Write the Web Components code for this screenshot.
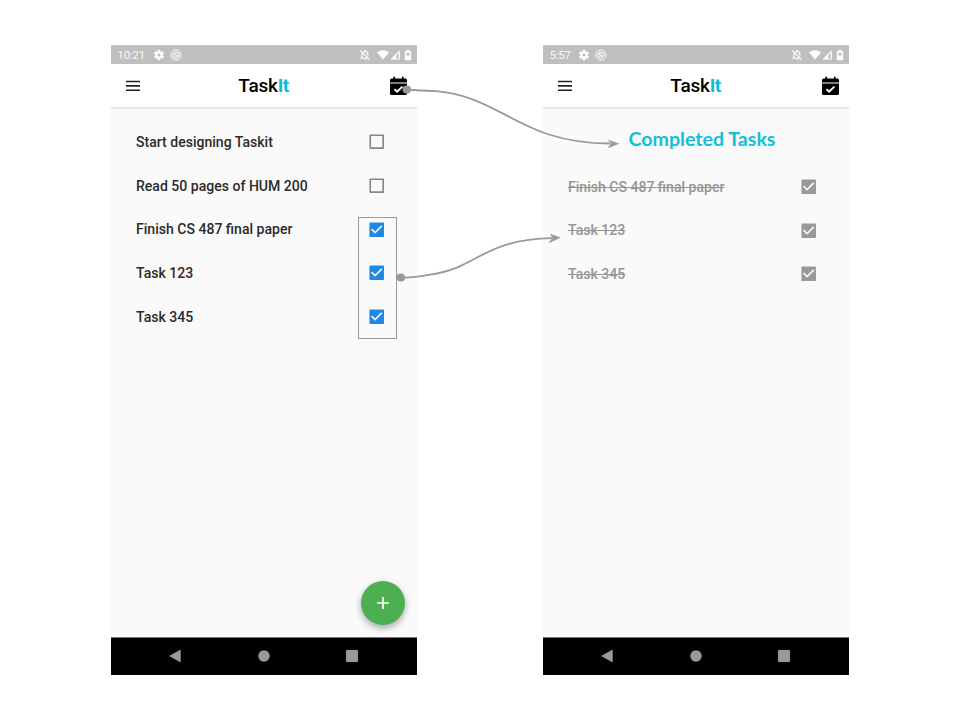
<!DOCTYPE html>
<html lang="en"><head><meta charset="utf-8"><title>TaskIt</title>
<style>
body{margin:0;width:960px;height:720px;overflow:hidden;background:#fff;font-family:Roboto,"Liberation Sans",sans-serif}
</style></head><body>
<flow-board>
  <phone-screen>
    <status-bar slot="status" time="10:21"></status-bar>
    <app-bar slot="bar"></app-bar>
    <task-row>Start designing Taskit</task-row>
    <task-row>Read 50 pages of HUM 200</task-row>
    <task-row state="checked">Finish CS 487 final paper</task-row>
    <task-row state="checked">Task 123</task-row>
    <task-row state="checked">Task 345</task-row>
    <add-button slot="overlay"></add-button>
  </phone-screen>
  <phone-screen>
    <status-bar slot="status" time="5:57"></status-bar>
    <app-bar slot="bar"></app-bar>
    <list-heading>Completed Tasks</list-heading>
    <task-row state="done">Finish CS 487 final paper</task-row>
    <task-row state="done">Task 123</task-row>
    <task-row state="done">Task 345</task-row>
  </phone-screen>
  <flow-arrows slot="overlay"></flow-arrows>
</flow-board>
<script>
function define(name, html, setup){
  const template = document.createElement('template');
  template.innerHTML = html;
  customElements.define(name, class extends HTMLElement{
    connectedCallback(){
      if(this.shadowRoot) return;
      this.attachShadow({mode:'open'}).appendChild(template.content.cloneNode(true));
      if(setup) setup(this, this.shadowRoot);
    }
  });
}
define('flow-board', `<style>
:host{position:relative;display:flex;gap:126px;width:960px;height:720px;box-sizing:border-box;padding:45px 0 45px 111px}
</style><slot></slot><slot name="overlay"></slot>`);

define('phone-screen', `<style>
:host{position:relative;display:flex;flex-direction:column;width:306px;height:630px;background:#fafafa}
main{flex:1;padding:11px 30.5px 0 25px;display:flex;flex-direction:column}
</style><slot name="status"></slot><slot name="bar"></slot><main><slot></slot></main><nav-bar></nav-bar><slot name="overlay"></slot>`);

define('status-bar', `<style>
:host{display:flex;align-items:center;height:19px;background:#bfbfbf;color:#fff;font-size:11.500px;padding:0 4px 0 6.500px;box-sizing:border-box;box-shadow:inset 0 1px #c9c9c9}
span{letter-spacing:-.2px;padding-top:1px;opacity:.9}
svg{display:block;fill:#fff}
.gear{margin-left:7.500px}.dnd{margin-left:5px}.bell{margin-left:auto}.wifi{margin-left:6px}.cell{margin-left:1px}.bat{margin-left:3px}
</style><span></span>
<svg class="gear" width="12" height="12" viewBox="0 0 24 24"><path stroke="#fff" d="M19.14 12.94c.04-.3.06-.61.06-.94s-.02-.64-.07-.94l2.03-1.58a.49.49 0 0 0 .12-.61l-1.92-3.32a.49.49 0 0 0-.59-.22l-2.39.96a7 7 0 0 0-1.62-.94l-.36-2.54a.48.48 0 0 0-.48-.41h-3.84a.48.48 0 0 0-.47.41l-.36 2.54c-.59.24-1.13.57-1.62.94l-2.39-.96a.48.48 0 0 0-.59.22L2.74 8.87a.48.48 0 0 0 .12.61l2.03 1.58a6 6 0 0 0 0 1.88l-2.03 1.58a.49.49 0 0 0-.12.61l1.92 3.32c.12.22.37.29.59.22l2.39-.96c.5.38 1.03.7 1.62.94l.36 2.54c.05.24.24.41.48.41h3.84c.24 0 .44-.17.47-.41l.36-2.54a7 7 0 0 0 1.62-.94l2.39.96c.22.08.47 0 .59-.22l1.92-3.32a.48.48 0 0 0-.12-.61zM12 15.600a3.600 3.600 0 1 1 0-7.200 3.600 3.600 0 0 1 0 7.200z"/></svg>
<svg class="dnd" width="12" height="12" viewBox="0 0 12 12"><circle cx="6" cy="6" r="5.100" fill="none" stroke="#fff"/><path d="M4.200 3.200H6A2.800 2.800 0 0 1 8.700 6.800M3.300 5v1.500A2.300 2.300 0 0 0 5.400 8.800H7M3.200 3.600l5.400 4.900" fill="none" stroke="#fff" stroke-width="1.100"/></svg>
<svg class="bell" width="12" height="12" viewBox="0 0 12 12"><path d="M1.200 1.500 10.600 10.800M3.200 4.600Q2.900 5.200 2.900 6v2.200L2 9.200h6.600M4.300 3Q5 2.400 6 2.400q2.900.3 2.900 3.300v1.700" fill="none" stroke="#fff" stroke-width="1.100"/><path d="M5.200 1h1.600v1.600H5.200zM4.900 9.900h2.200Q6 12 4.900 9.900z"/></svg>
<svg class="wifi" width="12" height="10" viewBox="0 0 12 10"><path d="M0 2.500C3.400-.5 8.600-.5 12 2.500L6 9.400z"/></svg>
<svg class="cell" width="10" height="10" viewBox="0 0 10 10"><path fill-rule="evenodd" d="M9.800.2v9.400H.3zM8.800 2.800 6.300 5.400v3.200h2.500z"/></svg>
<svg class="bat" width="10" height="12" viewBox="0 0 10 12"><path fill-rule="evenodd" d="M3.700.8h2.600v1.100h1q.9 0 .9.900v7.500q0 .9-.9.900H2.700q-.9 0-.9-.9V2.800q0-.9.9-.9h1zM3.400 3.800v2.600h3.200V3.800z"/></svg>`,
 (el,root)=>{root.querySelector('span').textContent=el.getAttribute('time')});

define('app-bar', `<style>
:host{display:flex;align-items:center;justify-content:space-between;height:45px;box-sizing:border-box;padding:0 10px 0 15px;background:#fff;border-bottom:2px solid #e8e8e8}
h1{margin:0 3px 0 0;font-size:19px;line-height:24px;font-weight:500;color:#000;letter-spacing:-.25px}
b{color:#06bfd9;font-weight:700;letter-spacing:-.5px}svg{display:block}
</style><svg width="14" height="12" viewBox="0 0 14 12"><path d="M0 1.500h14M0 5.900h14M0 10.300h14" stroke="#222" stroke-width="1.600"/></svg>
<h1>Task<b>It</b></h1>
<svg width="17" height="20" viewBox="0 0 17 20"><path d="M0 6.600V4.200q0-1.600 1.600-1.600h1.700V1.500q0-1 .9-1t.9 1v1.100h6.800V1.500q0-1 .9-1t.9 1v1.100h1.700Q17 2.600 17 4.200v2.400z"/><path d="M0 7.600h17v9.800q0 1.600-1.600 1.600H1.600Q0 19 0 17.400z"/><path d="m4.500 13.200 2.700 2.500 5.200-5.100" fill="none" stroke="#fff" stroke-width="2"/></svg>`);

define('list-heading', `<style>
:host{display:block;box-sizing:border-box;height:44.700px;padding:6px 0 0 17.500px;line-height:26px;text-align:center;font-family:Lato,sans-serif;font-weight:700;font-size:19.600px;color:#10bfd9;white-space:nowrap}
</style><slot></slot>`);

define('task-row', `<style>
:host{display:flex;align-items:center;justify-content:space-between;height:43.700px;font-size:14.060px;font-weight:500;color:#2b2b2b;white-space:nowrap}
:host([state=done]){color:#969696}
:host([state=done]) span{text-decoration:line-through;text-decoration-thickness:1px}
span{padding-top:.4px}
svg{display:block;width:19.400px;height:19.400px;fill:#858585}
:host([state=checked]) svg{fill:#1e88e5}:host([state=done]) svg{fill:#999}
</style><span><slot></slot></span><svg viewBox="0 0 24 24"><path/></svg>`,
 (el,root)=>{root.querySelector('path').setAttribute('d', el.hasAttribute('state')
  ? 'M20 3H4q-1 0-1 1v16q0 1 1 1h16q1 0 1-1V4q0-1-1-1zM10 17l-5-5 1.410-1.410L10 14.170l7.590-7.590L19 8z'
  : 'M19 5v14H5V5h14m1-2H4q-1 0-1 1v16q0 1 1 1h16q1 0 1-1V4q0-1-1-1z')});

define('add-button', `<style>
:host{position:absolute;right:12px;bottom:50px;width:44px;height:44px;border-radius:50%;background:#4caf50;box-shadow:0 4px 6px rgba(0,0,0,.24),0 1px 8px rgba(0,0,0,.1);display:grid;place-items:center}
</style><svg width="12" height="12" viewBox="0 0 12 12"><path d="M6 0v12M0 6h12" stroke="#fff" stroke-width="1.700"/></svg>`);

define('nav-bar', `<style>
:host{display:flex;align-items:center;justify-content:space-between;height:38px;box-sizing:border-box;padding:0 59px 1.500px 58px;background:#000;border-top:1px solid #777}
svg{display:block}
</style><svg width="12" height="14" viewBox="0 0 12 14"><path d="M11.700.4v13.200L0 7z" fill="#999"/></svg><svg width="12" height="12"><circle cx="6" cy="6" r="5.800" fill="#999"/></svg><svg width="12" height="12"><rect width="12" height="12" rx=".7" fill="#999"/></svg>`);

define('flow-arrows', `<style>
:host{position:absolute;inset:0}svg{display:block}
</style><svg width="960" height="720" fill="none" stroke="#999" stroke-width="1.800">
<rect x="358.500" y="217.500" width="38" height="121" stroke-width="1"/>
<path d="M407 89.500C420 90.800 427 90.600 436 91.200C503 97 520 143.500 610 143.500"/>
<ellipse cx="406.800" cy="89.500" rx="4.300" ry="3.900" fill="#999" stroke="none"/>
<path d="M401 277.500C415 278 425 275.500 437 273.500C475 267 487 239 552 238.200"/>
<ellipse cx="400.800" cy="277.500" rx="4.300" ry="3.900" fill="#999" stroke="none"/>
<path d="M619.500 143.800 607.500 139.500 611 143.600 607.500 148.200z" fill="#999" stroke="none"/>
<path d="M560.800 237.500 549.800 233.700 552.500 238 548.200 243.600z" fill="#999" stroke="none"/>
</svg>`);
</script></body></html>
